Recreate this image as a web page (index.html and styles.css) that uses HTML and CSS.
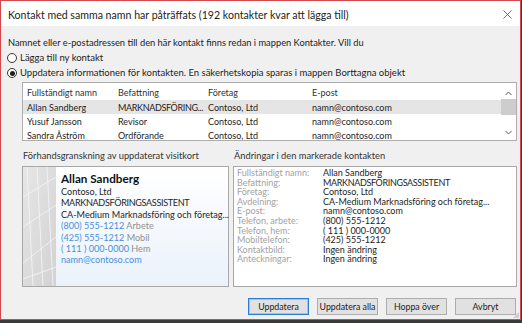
FILE: index.html
```html
<!DOCTYPE html>
<html lang="sv">
<head>
    <meta charset="UTF-8">
    <title>Kontakt med samma namn har påträffats</title>
    <link rel="stylesheet" href="styles.css">
</head>
<body>
    <div class="window">
        <div class="titlebar">
            <span class="title">Kontakt med samma namn har påträffats (192 kontakter kvar att lägga till)</span>
            <svg class="close" width="10" height="10" viewBox="0 0 10 10"><path d="M0.5 0.5 L9.5 9.5 M9.5 0.5 L0.5 9.5" stroke="#555" stroke-width="0.9" fill="none"/></svg>
        </div>
        <div class="dialog">
            <p class="intro">Namnet eller e-postadressen till den här kontakt finns redan i mappen Kontakter. Vill du</p>
            <div class="radio"><span class="dot"></span>Lägga till ny kontakt</div>
            <div class="radio checked"><span class="dot"></span>Uppdatera informationen för kontakten. En säkerhetskopia sparas i mappen Borttagna objekt</div>

            <div class="list">
                <div class="rows">
                    <div class="row head"><span>Fullständigt namn</span><span>Befattning</span><span>Företag</span><span>E-post</span></div>
                    <div class="row selected"><span>Allan Sandberg</span><span class="caps">MARKNADSFÖRING...</span><span>Contoso, Ltd</span><span>namn@contoso.com</span></div>
                    <div class="row"><span>Yusuf Jansson</span><span>Revisor</span><span>Contoso, Ltd</span><span>namn@contoso.com</span></div>
                    <div class="row"><span>Sandra Åström</span><span>Ordförande</span><span>Contoso, Ltd</span><span>namn@contoso.com</span></div>
                </div>
                <div class="scrollbar">
                    <svg width="7" height="5" viewBox="0 0 7 5"><path d="M0.5 4 L3.5 1 L6.5 4" stroke="#555" stroke-width="1" fill="none"/></svg>
                    <div class="thumb"></div>
                    <svg class="down" width="7" height="5" viewBox="0 0 7 5"><path d="M0.5 1 L3.5 4 L6.5 1" stroke="#555" stroke-width="1" fill="none"/></svg>
                </div>
            </div>

            <div class="panels">
                <div class="preview">
                    <div class="caption">Förhandsgranskning av uppdaterat visitkort</div>
                    <div class="card">
                        <svg class="card-art" width="33" height="119" viewBox="0 0 33 119" preserveAspectRatio="none">
                            <defs>
                                <linearGradient id="art" x1="0" y1="0" x2="1" y2="1">
                                    <stop offset="0" stop-color="#e6e6e6"/>
                                    <stop offset="1" stop-color="#d2d2d2"/>
                                </linearGradient>
                            </defs>
                            <rect width="33" height="119" fill="url(#art)"/>
                            <g stroke="#f6f6f6" stroke-width="0.8" fill="none">
                                <path d="M4 0 L10 119"/>
                                <path d="M14 0 L20 119"/>
                                <path d="M0 30 L33 10"/>
                                <path d="M0 60 L33 38"/>
                                <path d="M0 96 L33 70"/>
                                <path d="M0 112 L33 100"/>
                                <path d="M24 0 L30 119"/>
                            </g>
                        </svg>
                        <div class="card-text">
                            <div class="name">Allan Sandberg</div>
                            <div>Contoso, Ltd</div>
                            <div class="caps">MARKNADSFÖRINGSASSISTENT</div>
                            <div>CA-Medium Marknadsföring och företag...</div>
                            <div><span class="link">(800) 555-1212</span> <span class="kind">Arbete</span></div>
                            <div><span class="link">(425) 555-1212</span> <span class="kind">Mobil</span></div>
                            <div><span class="link">( 111 ) 000-0000</span> <span class="kind">Hem</span></div>
                            <div class="link">namn@contoso.com</div>
                        </div>
                    </div>
                </div>
                <div class="changes">
                    <div class="caption">Ändringar i den markerade kontakten</div>
                    <div class="change-box">
                        <span class="label">Fullständigt namn:</span><span>Allan Sandberg</span>
                        <span class="label">Befattning:</span><span class="caps">MARKNADSFÖRINGSASSISTENT</span>
                        <span class="label">Företag:</span><span>Contoso, Ltd</span>
                        <span class="label">Avdelning:</span><span>CA-Medium Marknadsföring och företag...</span>
                        <span class="label">E-post:</span><span>namn@contoso.com</span>
                        <span class="label">Telefon, arbete:</span><span>(800) 555-1212</span>
                        <span class="label">Telefon, hem:</span><span>( 111 ) 000-0000</span>
                        <span class="label">Mobiltelefon:</span><span>(425) 555-1212</span>
                        <span class="label">Kontaktbild:</span><span>Ingen ändring</span>
                        <span class="label">Anteckningar:</span><span>Ingen ändring</span>
                    </div>
                </div>
            </div>

            <div class="buttons">
                <button class="btn default">Uppdatera</button>
                <button class="btn">Uppdatera alla</button>
                <button class="btn">Hoppa över</button>
                <button class="btn">Avbryt</button>
            </div>
            <span class="grip"></span>
        </div>
    </div>
</body>
</html>
```

FILE: styles.css
```css
* { box-sizing: border-box; }
body { margin: 0; background: #3a3a3a; font-family: 'Lato', sans-serif; color: #1e1e1e; }
.window { width: 521px; height: 320px; border: 1px solid #d4474c; background: #f0f0f0; display: flex; flex-direction: column; }
.titlebar { height: 25px; background: #fff; display: flex; align-items: center; justify-content: space-between; padding: 2px 8px 0 7px; }
.title { font-size: 10.6px; color: #222; }
.close { display: block; width: 9px; height: 9px; }
.dialog { flex: 1; display: flex; flex-direction: column; padding: 0 3px 0 6px; position: relative; }
.intro { margin: 11px 0 0 1px; font-size: 9.3px; line-height: 12px; color: #222; }
.radio { display: flex; align-items: center; font-size: 9.5px; line-height: 12px; margin-top: 3px; }
.dot { width: 10px; height: 10px; border: 1px solid #333; border-radius: 50%; margin-right: 3px; display: flex; align-items: center; justify-content: center; background: #fff; flex-shrink: 0; }
.checked .dot::after { content: ''; width: 5px; height: 5px; border-radius: 50%; background: #1e1e1e; }
.list { margin: 3px 0 0 15px; height: 59px; border: 1px solid #adadad; background: #fff; display: flex; overflow: hidden; }
.rows { flex: 1; padding-top: 2px; }
.row { display: grid; grid-template-columns: 91px 90px 104px 1fr; padding-left: 4px; height: 14px; align-items: center; font-size: 9px; white-space: nowrap; }
.row.head { height: 15px; color: #333; }
.row.selected { background: #e5e5e5; }
.caps { letter-spacing: -0.35px; }
.scrollbar { width: 15px; display: flex; flex-direction: column; align-items: center; padding-top: 8px; }
.thumb { width: 15px; height: 16px; background: #cdcdcd; margin-top: 3px; }
.down { margin-top: auto; margin-bottom: 5px; }
.panels { display: flex; gap: 4px; margin: 9px 0 0 15px; }
.caption { font-size: 9.3px; line-height: 12px; color: #333; margin: 0 0 4px 1px; }
.card { width: 207px; height: 121px; border: 1px solid #a8a8a8; display: flex; background: linear-gradient(#ffffff, #eaf2fb); }
.card-art { display: block; width: 33px; height: 119px; flex-shrink: 0; }
.card-text { padding: 4px 0 0 5px; font-size: 9.1px; line-height: 11.4px; color: #262626; white-space: nowrap; }
.card-text .name { font-size: 11.7px; font-weight: bold; line-height: 14px; color: #111; margin-bottom: 1px; }
.link { color: #4a8fd8; }
.kind { color: #8f8f8f; }
.change-box { width: 284px; height: 121px; border: 1px solid #a8a8a8; background: #fff; display: grid; grid-template-columns: 86px 1fr; align-content: start; padding: 1px 0 0 3px; font-size: 9px; line-height: 9.6px; white-space: nowrap; }
.label { color: #a2a2a2; }
.buttons { display: flex; justify-content: flex-end; gap: 8px; margin-top: 11px; padding-right: 1px; }
.btn { width: 61px; height: 17px; padding: 0; font-family: 'Lato', sans-serif; font-size: 8.8px; color: #222; white-space: nowrap; background: #e1e1e1; border: 1px solid #adadad; }
.btn.default { border-color: #2a7fd4; box-shadow: inset 0 0 0 1px #9cc6ee; }
.grip { position: absolute; right: 1px; bottom: 1px; width: 6px; height: 6px; background: radial-gradient(circle, #b8b8b8 0.6px, transparent 0.9px) 0 0 / 2px 2px; clip-path: polygon(100% 0, 100% 100%, 0 100%); }
```
